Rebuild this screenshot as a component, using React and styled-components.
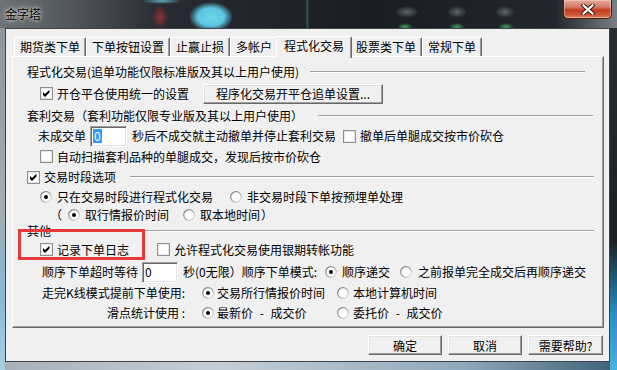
import React from 'react';
import styled, { createGlobalStyle, css } from 'styled-components';

const GlobalStyle = createGlobalStyle`
  html, body {
    margin: 0;
    padding: 0;
    background: #1b1f24;
  }
  body {
    font-family: "Noto Sans CJK SC", "Noto Sans", sans-serif;
    font-size: 12px;
    color: #000;
  }
`;

// окно с рамкой aero
const Window = styled.div`
  position: relative;
  width: 617px;
  height: 370px;
  display: flex;
  flex-direction: column;
  overflow: hidden;
  background:
    linear-gradient(180deg, #8d9296 0%, #a5acb2 55%, #86b9d6 80%, #a9cfe2 100%) left top / 5px 100% no-repeat,
    linear-gradient(180deg, #2a2e33 0%, #1c1f23 65%, #2a8fc0 85%, #47b2dc 100%) right top / 7px 100% no-repeat,
    linear-gradient(90deg, #a7b0b7 0%, #c6ced5 35%, #8fa9bd 75%, #3e6078 100%) left bottom / 100% 8px no-repeat,
    #2b2f34;
`;

const TitleBar = styled.div`
  flex: none;
  height: 28px;
  display: flex;
  justify-content: space-between;
  align-items: flex-start;
  padding-left: 5px;
  background:
    radial-gradient(22px 15px at 211px 17px, #6fd3ea 0%, #5cc6e2 60%, rgba(92, 198, 226, 0) 100%),
    radial-gradient(8px 12px at 160px 17px, rgba(170, 50, 50, 0.8) 0%, rgba(170, 50, 50, 0) 100%),
    radial-gradient(20px 3px at 162px 1px, rgba(110, 200, 225, 0.8) 0%, rgba(110, 200, 225, 0) 100%),
    radial-gradient(8px 4px at 405px 27px, rgba(70, 200, 100, 0.8) 0%, rgba(70, 200, 100, 0) 100%),
    radial-gradient(8px 4px at 457px 27px, rgba(70, 200, 100, 0.8) 0%, rgba(70, 200, 100, 0) 100%),
    radial-gradient(8px 4px at 506px 27px, rgba(70, 200, 100, 0.8) 0%, rgba(70, 200, 100, 0) 100%),
    radial-gradient(12px 6px at 407px 12px, rgba(120, 128, 136, 0.7) 0%, rgba(120, 128, 136, 0) 100%),
    radial-gradient(10px 6px at 457px 12px, rgba(120, 128, 136, 0.7) 0%, rgba(120, 128, 136, 0) 100%),
    radial-gradient(10px 6px at 505px 12px, rgba(120, 128, 136, 0.7) 0%, rgba(120, 128, 136, 0) 100%),
    linear-gradient(90deg, transparent 306px, rgba(60, 140, 150, 0.6) 307px, transparent 309px),
    linear-gradient(90deg, #6d7276 0%, #50555a 12%, #282c32 26%, #1a1e24 60%, #22262b 90%, #7a7f84 100%);
`;

const Title = styled.span`
  margin-top: 6px;
  line-height: 16px;
  text-shadow: 0 0 6px rgba(255, 255, 255, 0.9), 0 0 3px rgba(255, 255, 255, 0.7);
`;

const CloseButton = styled.div`
  box-sizing: border-box;
  width: 49px;
  height: 19px;
  margin-right: 5px;
  display: flex;
  align-items: center;
  justify-content: center;
  border: 1px solid #4a1c14;
  border-top: none;
  border-radius: 0 0 5px 5px;
  background: linear-gradient(180deg, #e3a99b 0%, #d67a66 40%, #c23a22 55%, #cf5a3c 85%, #e08a62 100%);
  box-shadow: inset 0 0 0 1px rgba(255, 220, 210, 0.45);
`;

const Client = styled.div`
  flex: 1;
  margin: 0 7px 8px 5px;
  display: flex;
  flex-direction: column;
  padding: 7px 0 6px;
  background: #f0f0f0;
  border: 1px solid #3e4246;
`;

const TabStrip = styled.div`
  position: relative;
  z-index: 1;
  flex: none;
  height: 20px;
  display: flex;
  align-items: flex-end;
  padding-left: 8px;
`;

const Tab = styled.div`
  box-sizing: border-box;
  height: 19px;
  padding: 0 5px;
  line-height: 17px;
  white-space: nowrap;
  background: #f0f0f0;
  border: 1px solid #fff;
  border-bottom: none;
  border-right-color: #696969;
  border-radius: 2px 2px 0 0;
  box-shadow: inset -1px 0 0 #a0a0a0;
  ${p => p.$active && css`
    position: relative;
    z-index: 2;
    height: 22px;
    margin: 0 -2px -2px;
    padding: 0 7px 3px;
    line-height: 18px;
  `}
`;

const Panel = styled.div`
  position: relative;
  flex: none;
  box-sizing: border-box;
  height: 272px;
  margin: 0 5px 0 6px;
  padding: 4px 0;
  display: flex;
  flex-direction: column;
  border: 1px solid;
  border-color: #fff #696969 #696969 #fff;
  box-shadow: inset -1px -1px 0 #a0a0a0;
`;

const Row = styled.div`
  flex: none;
  height: ${p => p.$h}px;
  display: flex;
  align-items: center;
  padding-left: ${p => p.$pl}px;
  white-space: nowrap;
  line-height: 14px;
`;

const Text = styled.span`
  flex: none;
  margin-left: ${p => p.$ml || 0}px;
  ${p => p.$w && css`
    width: ${p.$w}px;
  `}
  ${p => p.$right && css`
    text-align: right;
  `}
  ${p => p.$spaced && css`
    word-spacing: 4px;
  `}
`;

const Rule = styled.div`
  flex: 1;
  height: 0;
  margin-left: ${p => p.$ml}px;
  margin-right: ${p => p.$mr}px;
  border-top: 1px solid #a0a0a0;
  border-bottom: 1px solid #fff;
`;

const CheckIcon = styled.svg`
  flex: none;
  display: block;
  margin-left: ${p => p.$ml || 0}px;
`;

const Field = styled.div`
  flex: none;
  box-sizing: border-box;
  width: ${p => p.$w}px;
  height: 21px;
  margin-left: 4px;
  padding-left: 2px;
  display: flex;
  align-items: center;
  background: #fff;
  border: 1px solid;
  border-color: #a0a0a0 #fff #fff #a0a0a0;
  box-shadow: inset 1px 1px 0 #696969, inset -1px -1px 0 #e3e3e3;
`;

const Selected = styled.span`
  padding: 0 1px;
  line-height: 14px;
  color: #fff;
  background: #3399ff;
`;

const Button = styled.div`
  flex: none;
  box-sizing: border-box;
  width: ${p => p.$w}px;
  height: 20px;
  margin-left: ${p => p.$ml || 0}px;
  display: flex;
  align-items: center;
  justify-content: center;
  white-space: nowrap;
  background: #f0f0f0;
  border: 1px solid;
  border-color: #fff #696969 #696969 #fff;
  box-shadow: inset -1px -1px 0 #a0a0a0, inset 1px 1px 0 #e3e3e3;
`;

const Footer = styled.div`
  flex: none;
  display: flex;
  justify-content: flex-end;
  gap: 6px;
  margin-top: 7px;
  padding-right: 6px;
`;

// красная рамка поверх «其他»
const Highlight = styled.div`
  position: absolute;
  left: 5px;
  top: 172px;
  width: 127px;
  height: 31px;
  box-sizing: border-box;
  border: 3px solid #e5393a;
  pointer-events: none;
`;

const Check = ({ on, ml }) => (
  <CheckIcon $ml={ml} width="13" height="13" viewBox="0 0 13 13">
    <rect x="0.5" y="0.5" width="12" height="12" fill="#fff" stroke="#8e8f8f" />
    <rect x="1.5" y="1.5" width="10" height="10" fill="none" stroke="#e6e6e6" />
    {on && <polygon points="3,5 5,7 9.5,2.8 9.5,5.6 5,10 3,8" fill="#000" />}
  </CheckIcon>
);

const Radio = ({ on, ml }) => (
  <CheckIcon $ml={ml} width="12" height="12" viewBox="0 0 12 12">
    <defs>
      <linearGradient id="rim" x1="0" y1="0" x2="1" y2="1">
        <stop offset="0" stopColor="#6f6f6f" />
        <stop offset="0.5" stopColor="#a8a8a8" />
        <stop offset="1" stopColor="#e8e8e8" />
      </linearGradient>
    </defs>
    <circle cx="6" cy="6" r="5.3" fill="#fff" stroke="url(#rim)" strokeWidth="1.2" />
    {on && <circle cx="6" cy="6" r="2" fill="#000" />}
  </CheckIcon>
);

const tabs = ['期货类下单', '下单按钮设置', '止赢止损', '多帐户', '程式化交易', '股票类下单', '常规下单'];

export default function App() {
  return (
    <>
      <GlobalStyle />
      <Window>
        <TitleBar>
          <Title>金字塔</Title>
          <CloseButton>
            <svg width="14" height="11" viewBox="0 0 14 11">
              <path d="M2.5 1.5 L11.5 9.5 M11.5 1.5 L2.5 9.5" stroke="#3b1a12" strokeWidth="4.2" strokeLinecap="square" />
              <path d="M2.5 1.5 L11.5 9.5 M11.5 1.5 L2.5 9.5" stroke="#fff" strokeWidth="2.2" strokeLinecap="square" />
            </svg>
          </CloseButton>
        </TitleBar>
        <Client>
          <TabStrip>
            {tabs.map(t => (
              <Tab key={t} $active={t === '程式化交易'}>{t}</Tab>
            ))}
          </TabStrip>
          <Panel>
            <Row $h={21} $pl={14}>
              <Text>程式化交易(追单功能仅限标准版及其以上用户使用)</Text>
              <Rule $ml={11} $mr={18} />
            </Row>
            <Row $h={23} $pl={27}>
              <Check on />
              <Text $ml={4}>开仓平仓使用统一的设置</Text>
              <Button $w={180} $ml={14}>程序化交易开平仓追单设置...</Button>
            </Row>
            <Row $h={21} $pl={14}>
              <Text>套利交易（套利功能仅限专业版及其以上用户使用）</Text>
              <Rule $ml={15} $mr={10} />
            </Row>
            <Row $h={20} $pl={25}>
              <Text>未成交单</Text>
              <Field $w={37}><Selected>0</Selected></Field>
              <Text $ml={5}>秒后不成交就主动撤单并停止套利交易</Text>
              <Check ml={7} />
              <Text $ml={4}>撤单后单腿成交按市价砍仓</Text>
            </Row>
            <Row $h={21} $pl={27}>
              <Check />
              <Text $ml={4}>自动扫描套利品种的单腿成交，发现后按市价砍仓</Text>
            </Row>
            <Row $h={20} $pl={14}>
              <Check on />
              <Text $ml={4}>交易时段选项</Text>
              <Rule $ml={14} $mr={9} />
            </Row>
            <Row $h={20} $pl={27}>
              <Radio on />
              <Text $ml={5}>只在交易时段进行程式化交易</Text>
              <Radio ml={17} />
              <Text $ml={5}>非交易时段下单按预埋单处理</Text>
            </Row>
            <Row $h={16} $pl={37}>
              <Text>（</Text>
              <Radio on ml={6} />
              <Text $ml={5}>取行情报价时间</Text>
              <Radio ml={14} />
              <Text $ml={5}>取本地时间</Text>
              <Text $ml={1}>）</Text>
            </Row>
            <Row $h={15} $pl={14}>
              <Text>其他</Text>
              <Rule $ml={4} $mr={9} />
            </Row>
            <Row $h={23} $pl={27}>
              <Check on />
              <Text $ml={4}>记录下单日志</Text>
              <Check ml={28} />
              <Text $ml={4}>允许程式化交易使用银期转帐功能</Text>
            </Row>
            <Row $h={22} $pl={29}>
              <Text>顺序下单超时等待</Text>
              <Field $w={36}>0</Field>
              <Text $ml={5} $w={142}>秒(0无限）顺序下单模式:</Text>
              <Radio on />
              <Text $ml={5}>顺序递交</Text>
              <Radio ml={10} />
              <Text $ml={6}>之前报单完全成交后再顺序递交</Text>
            </Row>
            <Row $h={20} $pl={27}>
              <Text $w={145} $right>走完K线模式提前下单使用:</Text>
              <Radio on ml={17} />
              <Text $ml={3} $w={120}>交易所行情报价时间</Text>
              <Radio />
              <Text $ml={4}>本地计算机时间</Text>
            </Row>
            <Row $h={20} $pl={27}>
              <Text $w={145} $right>滑点统计使用 :</Text>
              <Radio on ml={17} />
              <Text $ml={3} $w={120} $spaced>最新价 - 成交价</Text>
              <Radio />
              <Text $ml={4} $spaced>委托价 - 成交价</Text>
            </Row>
            <Highlight />
          </Panel>
          <Footer>
            <Button $w={74}>确定</Button>
            <Button $w={74}>取消</Button>
            <Button $w={75}>需要帮助?</Button>
          </Footer>
        </Client>
      </Window>
    </>
  );
}
